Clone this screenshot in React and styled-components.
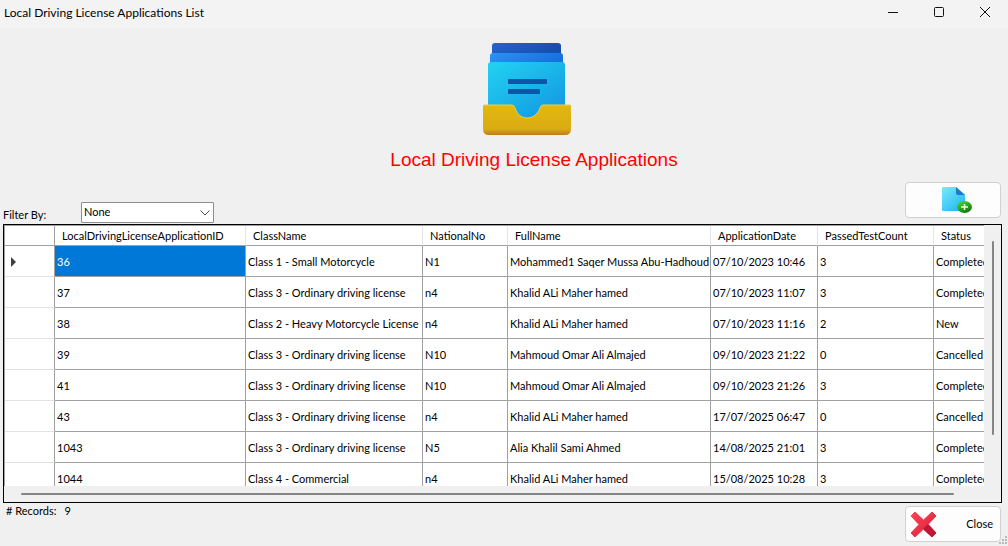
import React from "react";
import styled, { createGlobalStyle } from "styled-components";

const GlobalStyle = createGlobalStyle`
  * { box-sizing: border-box; }
  body {
    margin: 0;
    background: #f0f0f0;
    color: #000;
    font: 11px/16px Lato, "Liberation Sans", sans-serif;
  }
  button, select { font: inherit; color: inherit; }
`;

const Window = styled.div`
  display: flex;
  flex-direction: column;
  min-height: 100vh;
`;

const TitleBar = styled.header`
  display: flex;
  justify-content: space-between;
  height: 28px;
  padding-left: 4px;
  background: #f3f3f3;
  font: 12px/26px Lato, "Noto Sans", sans-serif;
`;

const WindowControls = styled.div`
  display: flex;
`;

const WindowButton = styled.button`
  display: flex;
  align-items: center;
  justify-content: center;
  width: 46px;
  height: 24px;
  padding: 0;
  border: 0;
  background: none;
`;

const Banner = styled.div`
  display: flex;
  flex-direction: column;
  align-items: center;
  padding: 12px 0 0 60px;
`;

const ArchiveDrawing = styled.svg`
  margin-right: 14px;
`;

const Heading = styled.h1`
  margin: 12px 0 0;
  color: #f00;
  font: 19px/24px "Liberation Sans", Arial, sans-serif;
`;

const Toolbar = styled.div`
  display: flex;
  align-items: flex-end;
  height: 52px;
  padding: 0 7px 1px 3px;
`;

const FilterLabel = styled.label`
  width: 78px;
`;

const SelectBox = styled.div`
  position: relative;
  width: 133px;
  height: 21px;
`;

const Select = styled.select`
  width: 100%;
  height: 100%;
  padding: 0 0 2px 2px;
  appearance: none;
  border: 1px solid #8c8c8c;
  border-radius: 1px;
  background: #fff;
`;

const SelectArrow = styled.svg`
  position: absolute;
  right: 4px;
  top: 8px;
  pointer-events: none;
`;

const Button = styled.button`
  display: flex;
  align-items: center;
  justify-content: ${(p) => (p.$spread ? "space-between" : "center")};
  width: 96px;
  height: 36px;
  padding: ${(p) => (p.$spread ? "0 7px 0 4px" : "0 0 0 7px")};
  margin: ${(p) => (p.$spread ? "3px 0 0" : "0 0 5px")};
  margin-left: auto;
  border: 1px solid #d0d0d0;
  border-radius: 4px;
  background: #fdfdfd;
`;

const GridFrame = styled.section`
  display: grid;
  grid-template-columns: minmax(0, 1fr) 17px;
  grid-template-rows: 261px 16px;
  margin: 0 6px 0 3px;
  border: 1px solid #000;
`;

const GridView = styled.div`
  overflow: hidden;
  background: #fff;
  border-top: 1px solid #a0a0a0;
  border-left: 1px solid #a0a0a0;
`;

const Table = styled.table`
  width: 100%;
  table-layout: fixed;
  border-collapse: separate;
  border-spacing: 0;
`;

const Column = styled.col`
  width: ${(p) => (p.$width ? `${p.$width}px` : "auto")};
`;

const HeaderCell = styled.th`
  height: 20px;
  padding: 0 0 0 7px;
  text-align: left;
  font-weight: normal;
  white-space: nowrap;
  border-right: 1px solid ${(p) => (p.$corner ? "#a0a0a0" : "#e5e5e5")};
  border-bottom: 1px solid #a0a0a0;
  &:last-child { border-right: 0; }
`;

const RowHeader = styled.th`
  height: 31px;
  padding: 2px 0 0 6px;
  text-align: left;
  border-right: 1px solid #a0a0a0;
  border-bottom: 1px solid #e3e3e3;
`;

const Cell = styled.td`
  height: 31px;
  padding: 2px 0 0 2px;
  overflow: hidden;
  white-space: nowrap;
  color: ${(p) => (p.$selected ? "#fff" : "inherit")};
  background: ${(p) => (p.$selected ? "#0078d7" : "#fff")};
  border-right: 1px solid #a0a0a0;
  border-bottom: 1px solid #a0a0a0;
  &:last-child { border-right: 0; }
`;

const CurrentRowMark = styled.svg`
  display: block;
`;

const VerticalTrack = styled.div`
  padding: 16px 0 0 8px;
`;

const HorizontalTrack = styled.div`
  padding: 7px 30px 0 17px;
`;

const Thumb = styled.div`
  background: #858585;
  border-radius: 1px;
  ${(p) => (p.$vertical ? "width: 2px; height: 194px;" : "height: 2px;")}
`;

const Footer = styled.footer`
  display: flex;
  align-items: flex-start;
  padding: 0 7px 4px 6px;
`;

const Records = styled.p`
  display: flex;
  gap: 8px;
  margin: 0;
`;

const SizeGrip = styled.svg`
  position: fixed;
  right: 0;
  bottom: 0;
`;

const columns = [
  ["LocalDrivingLicenseApplicationID", 191],
  ["ClassName", 177],
  ["NationalNo", 85],
  ["FullName", 203],
  ["ApplicationDate", 107],
  ["PassedTestCount", 116],
  ["Status", 0],
];

const rows = [
  ["36", "Class 1 - Small Motorcycle", "N1", "Mohammed1 Saqer Mussa Abu-Hadhoud", "07/10/2023 10:46", "3", "Completed"],
  ["37", "Class 3 - Ordinary driving license", "n4", "Khalid ALi Maher hamed", "07/10/2023 11:07", "3", "Completed"],
  ["38", "Class 2 - Heavy Motorcycle License", "n4", "Khalid ALi Maher hamed", "07/10/2023 11:16", "2", "New"],
  ["39", "Class 3 - Ordinary driving license", "N10", "Mahmoud Omar Ali Almajed", "09/10/2023 21:22", "0", "Cancelled"],
  ["41", "Class 3 - Ordinary driving license", "N10", "Mahmoud Omar Ali Almajed", "09/10/2023 21:26", "3", "Completed"],
  ["43", "Class 3 - Ordinary driving license", "n4", "Khalid ALi Maher hamed", "17/07/2025 06:47", "0", "Cancelled"],
  ["1043", "Class 3 - Ordinary driving license", "N5", "Alia Khalil Sami Ahmed", "14/08/2025 21:01", "3", "Completed"],
  ["1044", "Class 4 - Commercial", "n4", "Khalid ALi Maher hamed", "15/08/2025 10:28", "3", "Completed"],
];

function ArchiveIcon() {
  return (
    <ArchiveDrawing width="88" height="96" viewBox="0 0 88 96" aria-hidden="true">
      <defs>
        <linearGradient id="back" x1="0" y1="0" x2="1" y2="0.3">
          <stop offset="0" stopColor="#2563cd" />
          <stop offset="1" stopColor="#174fae" />
        </linearGradient>
        <linearGradient id="middle" x1="0" y1="0" x2="1" y2="0.3">
          <stop offset="0" stopColor="#2a94f4" />
          <stop offset="1" stopColor="#1672df" />
        </linearGradient>
        <linearGradient id="front" x1="0" y1="0" x2="0.8" y2="1">
          <stop offset="0" stopColor="#22d3f1" />
          <stop offset="1" stopColor="#1295e2" />
        </linearGradient>
        <linearGradient id="tray" x1="0" y1="0" x2="0" y2="1">
          <stop offset="0" stopColor="#e0b911" />
          <stop offset="0.8" stopColor="#dbac12" />
          <stop offset="1" stopColor="#c27a1a" />
        </linearGradient>
      </defs>
      <path d="M9 14V6q0-3 3-3h63q3 0 3 3v8z" fill="url(#back)" />
      <path d="M7 24V16q0-3 3-3h67q3 0 3 3v8z" fill="url(#middle)" />
      <path d="M5 70V25q0-3 3-3h71q3 0 3 3v45L60 86H25z" fill="url(#front)" />
      <rect x="25" y="39" width="39" height="5" rx="1" fill="#1053a8" />
      <rect x="25" y="49" width="32" height="5" rx="1" fill="#1053a8" />
      <path d="M1 65h28q2 0 3 3c2 6 6 10 12 10s11-4 13-10q1-3 3-3h27q1 0 1 1v23q0 6-6 6H6q-6 0-6-6V66q0-1 1-1z" fill="url(#tray)" />
      <path d="M1 65h28q2 0 3 3c2 6 6 10 12 10s11-4 13-10q1-3 3-3h27" fill="none" stroke="#f3cf3f" />
    </ArchiveDrawing>
  );
}

function NewFileIcon() {
  return (
    <svg width="32" height="28" viewBox="0 0 32 28" aria-hidden="true">
      <defs>
        <linearGradient id="sheet" x1="0" y1="0" x2="0.8" y2="1">
          <stop offset="0" stopColor="#7be9ff" />
          <stop offset="1" stopColor="#22b9ee" />
        </linearGradient>
        <linearGradient id="badge" x1="0" y1="0" x2="0.6" y2="1">
          <stop offset="0" stopColor="#4fe02a" />
          <stop offset="1" stopColor="#137a15" />
        </linearGradient>
      </defs>
      <path d="M1 2q0-1 1-1h13l9 8v15q0 1-1 1H2q-1 0-1-1z" fill="url(#sheet)" />
      <path d="M15 1l9 8h-7q-2 0-2-2z" fill="#1c79d2" />
      <ellipse cx="23.500" cy="21" rx="7.500" ry="6" fill="url(#badge)" />
      <path d="M20 21h7M23.500 18v6" stroke="#eefbe9" strokeWidth="1.500" />
    </svg>
  );
}

function CrossIcon() {
  return (
    <svg width="27" height="27" viewBox="0 0 27 27" aria-hidden="true">
      <defs>
        <linearGradient id="cross" x1="0" y1="0" x2="1" y2="1">
          <stop offset="0" stopColor="#fb4553" />
          <stop offset="1" stopColor="#dc1f3c" />
        </linearGradient>
      </defs>
      <path d="M5 1l8.500 8L22 1l4 4-8 8.500 8 8.500-4 4-8.500-8L5 26l-4-4 8-8.500L1 5z" fill="url(#cross)" stroke="url(#cross)" strokeLinejoin="round" />
      <path d="M18 13.500l8 8.500-4 4-8.500-8z" fill="#c01736" stroke="#c01736" strokeLinejoin="round" />
    </svg>
  );
}

export default function App() {
  return (
    <Window>
      <GlobalStyle />
      <TitleBar>
        <span>Local Driving License Applications List</span>
        <WindowControls>
          <WindowButton aria-label="Minimize">
            <svg width="10" height="10" stroke="#111"><path d="M0 5.500h10" /></svg>
          </WindowButton>
          <WindowButton aria-label="Maximize">
            <svg width="10" height="10" stroke="#111" fill="none"><rect x=".5" y=".5" width="9" height="9" rx="1" /></svg>
          </WindowButton>
          <WindowButton aria-label="Close window">
            <svg width="10" height="10" stroke="#111"><path d="M0 0l10 10M10 0L0 10" /></svg>
          </WindowButton>
        </WindowControls>
      </TitleBar>
      <Banner>
        <ArchiveIcon />
        <Heading>Local Driving License Applications</Heading>
      </Banner>
      <Toolbar>
        <FilterLabel htmlFor="filter">Filter By:</FilterLabel>
        <SelectBox>
          <Select id="filter" defaultValue="None">
            <option>None</option>
          </Select>
          <SelectArrow width="10" height="6" fill="none" stroke="#555">
            <path d="M.5 .5L5 5L9.500 .5" />
          </SelectArrow>
        </SelectBox>
        <Button aria-label="Add application"><NewFileIcon /></Button>
      </Toolbar>
      <GridFrame>
        <GridView>
          <Table>
            <colgroup>
              <Column $width={50} />
              {columns.map(([name, width]) => <Column key={name} $width={width} />)}
            </colgroup>
            <thead>
              <tr>
                <HeaderCell $corner />
                {columns.map(([name]) => <HeaderCell key={name} scope="col">{name}</HeaderCell>)}
              </tr>
            </thead>
            <tbody>
              {rows.map((row, r) => (
                <tr key={row[0]}>
                  <RowHeader scope="row">
                    {r === 0 && (
                      <CurrentRowMark width="5" height="10" fill="#404040"><path d="M0 0l5 5-5 5z" /></CurrentRowMark>
                    )}
                  </RowHeader>
                  {row.map((value, c) => <Cell key={c} $selected={r === 0 && c === 0}>{value}</Cell>)}
                </tr>
              ))}
            </tbody>
          </Table>
        </GridView>
        <VerticalTrack><Thumb $vertical /></VerticalTrack>
        <HorizontalTrack><Thumb /></HorizontalTrack>
      </GridFrame>
      <Footer>
        <Records><span># Records:</span><span>9</span></Records>
        <Button $spread><CrossIcon />Close</Button>
      </Footer>
      <SizeGrip width="10" height="10" fill="#b8b8b8" aria-hidden="true">
        <path d="M7 0h2v2H7zM4 3h2v2H4zM7 3h2v2H7zM1 6h2v2H1zM4 6h2v2H4zM7 6h2v2H7z" />
      </SizeGrip>
    </Window>
  );
}
